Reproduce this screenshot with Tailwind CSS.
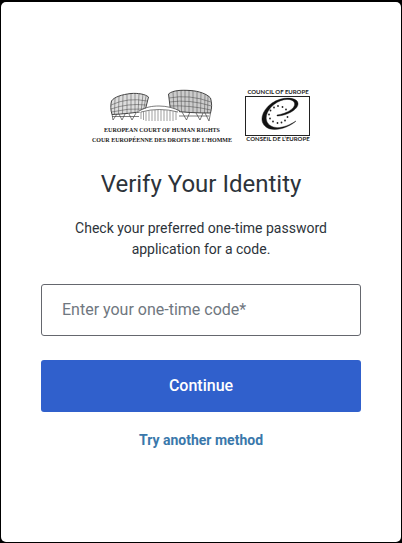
<!DOCTYPE html>
<html lang="en">
<head>
    <meta charset="UTF-8">
    <meta name="viewport" content="width=device-width, initial-scale=1.0">
    <title>Verify Your Identity</title>
    <script src="https://cdn.jsdelivr.net/npm/@tailwindcss/browser@4"></script>
</head>
<body class="bg-black min-h-screen flex flex-col px-px pt-[2px] pb-px font-[Roboto,sans-serif] text-[#2d333a]">

    <main class="flex-1 bg-white rounded-[5px] px-10 pt-[87px] pb-10 text-center">

        <!-- Logo -->
        <svg class="block mx-auto" width="220" height="55" viewBox="0 0 220 55" fill="none" stroke="#444" role="img" aria-label="European Court of Human Rights, Council of Europe">
            <!-- Left drum -->
            <path d="M20.500 12C23 8 31 5.500 40 4.500C47 4 54 5 57.500 8L54 22C43 24 32 25 21 25.500C19.500 21 19.500 16 20.500 12Z" fill="#ddd" stroke-width="1"/>
            <path d="M20 16Q37 8 56 12M20 20Q37 14 55 16M20.500 23Q37 19 54 20M24 9L23.500 25M28 7L27.500 25M32 6L31.500 25M36 5V25M40 5V24M44 5V24M48 5L47 24M52 5L50 23M55 7L52.500 22" stroke-width=".5"/>
            <path d="M21 25L22 31L26 25M28 25L31 31L34 25M38 25L41 31L45 24M21 27.500H48" stroke-width=".7"/>
            <!-- Right drum -->
            <path d="M77.500 5C82 1 91 1 99 1.500C108 2 116 5 119.500 9C121 14 121 19 119.500 24C106 24 92 23.500 79.500 21.500Z" fill="#ccc" stroke-width="1"/>
            <path d="M78 9Q98 5 120 13M78.500 13Q98 10 120.500 17M79 17Q98 16 120 21M82 3L83 22M86 2L87 22.500M90 1L90.500 23M94 1V23M98 1V23.500M102 1.500V24M106 2.500V24M110 4L109.500 24M114 5.500L113.500 24M117 7L116.500 24" stroke-width=".5"/>
            <path d="M91 23L95.500 31L99 23M105 24L109 31L112 24M114 24L118 32L119.500 24M88 27H118" stroke-width=".7"/>
            <!-- Middle hall -->
            <path d="M47 23C53 19 60 17 68 17C76 17 83 19 88 22V32H50V23Z" fill="#fff" stroke="none"/>
            <path d="M48 22C55 18 61 17 68 17C76 17 83 19 89 22M50 23Q68 18 87 23" stroke-width=".7"/>
            <path d="M50 23V30M52.500 23V31M55 22.500V32M58 22V32M61 21.500V32M64 21V32M67 21V32M70 21V32M73 21V32M76 21.500V32M79 22V32M82 22.500V32M85 23V31" stroke="#777" stroke-width=".7"/>

            <g class="font-['Liberation_Serif',serif] font-bold text-[6px]" fill="#222" stroke="none" text-anchor="middle">
                <text x="71" y="43">EUROPEAN COURT OF HUMAN RIGHTS</text>
                <text x="71" y="53">COUR EUROPÉENNE DES DROITS DE L’HOMME</text>
            </g>

            <!-- Council of Europe emblem -->
            <rect x="154.500" y="7.500" width="64" height="39" stroke="#222"/>
            <path d="M186 27C194 27 208 21 207 14C206 8 191 7 181 14C170 22 168 33 175 38C183 44 199 38 205 32C197 37 187 41 180 37C172 32 175 22 183 15.500C191 9 202 9 203.500 14C205 20 194 25 186 26Z" fill="#111" stroke="#111" stroke-width=".4"/>
            <g fill="#222" stroke="none">
                <circle cx="187" cy="17" r=".9"/><circle cx="191.500" cy="18" r=".9"/><circle cx="195" cy="20.500" r=".9"/>
                <circle cx="196.500" cy="28" r=".9"/><circle cx="194" cy="31.500" r=".9"/><circle cx="190.500" cy="33.500" r=".9"/>
                <circle cx="186.500" cy="34" r=".9"/><circle cx="182" cy="32.500" r=".9"/><circle cx="179" cy="29.500" r=".9"/>
                <circle cx="178" cy="25.500" r=".9"/><circle cx="179.500" cy="21.500" r=".9"/><circle cx="183" cy="18.500" r=".9"/>
            </g>
            <g class="font-[Lato,sans-serif] font-bold text-[6px]" fill="#222" stroke="none" text-anchor="middle">
                <text x="187" y="5">COUNCIL OF EUROPE</text>
                <text x="187" y="52">CONSEIL DE L’EUROPE</text>
            </g>
        </svg>

        <h1 class="mt-6 text-2xl leading-8">Verify Your Identity</h1>
        <p class="mt-[18px] mx-auto max-w-[280px] text-sm leading-[21px]">Check your preferred one-time password application for a code.</p>

        <form class="mt-6">
            <input
                type="text"
                id="code"
                name="code"
                aria-label="Enter your one-time code"
                placeholder="Enter your one-time code*"
                autocomplete="off"
                class="block w-full h-[52px] px-5 pb-[2px] border border-[#65676e] rounded-[3px] text-base placeholder:text-[#6f7780] focus:outline-none focus:border-[#3060cc]"
            >
            <button type="submit" class="mt-6 block w-full h-[52px] rounded-[3px] bg-[#3060cc] text-base font-medium text-white hover:bg-[#2a55b5]">
                Continue
            </button>
        </form>

        <a href="#" class="mt-[18px] inline-block text-sm font-bold text-[#3a78ab]">Try another method</a>
    </main>

</body>
</html>
